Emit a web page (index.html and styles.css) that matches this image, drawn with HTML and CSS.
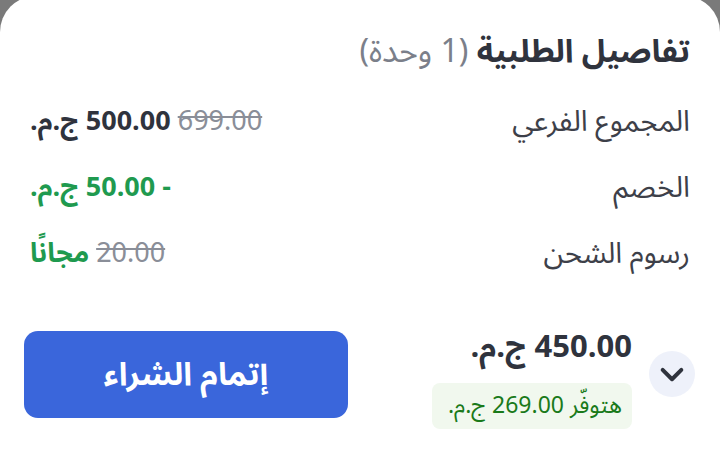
FILE: index.html
```html
<!DOCTYPE html>
<html lang="ar" dir="rtl">
<head>
<meta charset="utf-8">
<link rel="stylesheet" href="styles.css">
</head>
<body>
<div class="sheet">
  <h1 class="title"><span class="title-main">تفاصيل الطلبية</span> <span class="title-count">(1 وحدة)</span></h1>
  <div class="rows">
    <div class="row">
      <span class="label">المجموع الفرعي</span>
      <span class="value"><s class="old">699.00</s> <b class="dark">500.00 ج.م.</b></span>
    </div>
    <div class="row">
      <span class="label">الخصم</span>
      <span class="value"><b class="green">- 50.00 ج.م.</b></span>
    </div>
    <div class="row">
      <span class="label">رسوم الشحن</span>
      <span class="value"><s class="old">20.00</s> <b class="green">مجانًا</b></span>
    </div>
  </div>
  <div class="footer">
    <button class="toggle" aria-label="toggle">
      <svg width="28" height="28" viewBox="0 0 24 24"><path d="M4 8.5l8 8 8-8" fill="none" stroke="#2f333d" stroke-width="3.4" stroke-linecap="round" stroke-linejoin="round"/></svg>
    </button>
    <div class="totals">
      <div class="total">450.00 ج.م.</div>
      <div class="save">هتوفّر 269.00 ج.م.</div>
    </div>
    <button class="checkout">إتمام الشراء</button>
  </div>
</div>
</body>
</html>
```
FILE: styles.css
```css
html, body {
  margin: 0;
  padding: 0;
  height: 100%;
}
body {
  background: #7a7a7a;
  font-family: "Noto Sans Arabic", "Noto Sans", "DejaVu Sans", sans-serif;
  overflow: hidden;
}
.sheet {
  background: #ffffff;
  margin-top: -4px;
  height: 460px;
  border-radius: 36px 36px 0 0;
  padding: 0 30px 0 30px;
  box-sizing: border-box;
}
.title {
  margin: 0;
  padding-top: 34px;
  height: 44px;
  line-height: 44px;
  font-size: 32px;
  font-weight: 700;
  color: #2f333d;
  white-space: nowrap;
}
.title-count {
  font-weight: 400;
  color: #7b7f8a;
}
.rows {
  display: flex;
  flex-direction: column;
  margin-top: 14px;
}
.row {
  display: flex;
  justify-content: space-between;
  align-items: center;
  height: 66px;
}
.label {
  font-size: 29px;
  color: #3d4049;
}
.value {
  font-size: 27px;
}
.old {
  color: #8a8e98;
  font-weight: 400;
}
.dark {
  color: #2f333d;
  font-weight: 700;
}
.green {
  color: #1f9a4f;
  font-weight: 700;
}
.footer {
  display: flex;
  align-items: flex-start;
  margin-top: 43px;
  margin-right: -5px;
  margin-left: -6px;
}
.toggle {
  width: 46px;
  height: 46px;
  border-radius: 50%;
  border: none;
  background: #eef1fa;
  display: flex;
  align-items: center;
  justify-content: center;
  padding: 0;
  flex: none;
  margin-top: 22px;
}
.totals {
  display: flex;
  flex-direction: column;
  align-items: flex-start;
  margin-right: 17px;
  gap: 18px;
}
.total {
  font-size: 31px;
  font-weight: 700;
  color: #2f333d;
  line-height: 36px;
  white-space: nowrap;
}
.save {
  background: #f1f8ee;
  color: #1a7a1a;
  font-size: 23px;
  border-radius: 8px;
  height: 46px;
  line-height: 46px;
  padding: 0 10px;
  width: 180px;
  text-align: right;
  white-space: nowrap;
}
.checkout {
  margin-right: auto;
  margin-top: 2px;
  width: 324px;
  height: 87px;
  border: none;
  border-radius: 14px;
  background: #3a66db;
  color: #ffffff;
  font-family: inherit;
  font-size: 32px;
  font-weight: 700;
}
```
